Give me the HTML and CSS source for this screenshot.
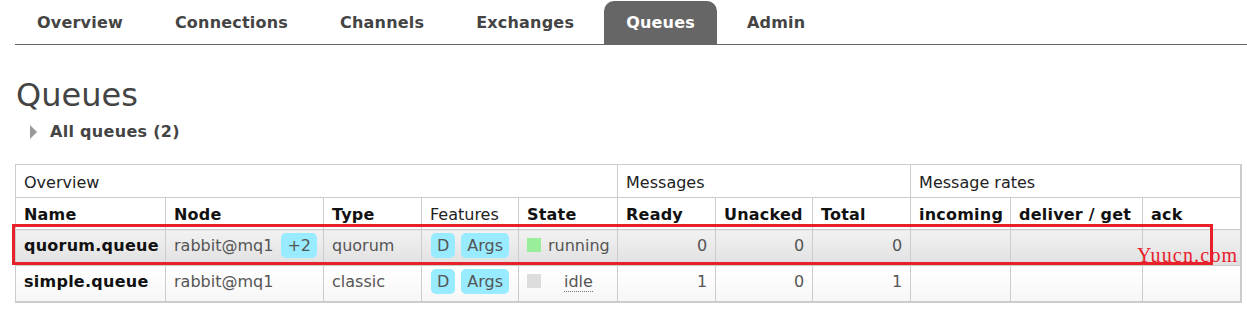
FILE: index.html
```html
<!DOCTYPE html>
<html lang="en">
<head>
  <meta charset="UTF-8" />
  <title>RabbitMQ Management</title>
  <link rel="stylesheet" href="styles.css">
</head>
<body>
  <ul class="tabs">
    <li>Overview</li>
    <li>Connections</li>
    <li>Channels</li>
    <li>Exchanges</li>
    <li class="active">Queues</li>
    <li>Admin</li>
  </ul>

  <div class="main">
    <h1>Queues</h1>
    <div class="section"><span class="arrow"></span>All queues (2)</div>

    <div class="wrap">
      <table class="list">
        <colgroup>
          <col style="width:150px"><col style="width:158px"><col style="width:98px">
          <col style="width:97px"><col style="width:99px"><col style="width:98px">
          <col style="width:97px"><col style="width:98px"><col style="width:100px">
          <col style="width:132px"><col style="width:98px">
        </colgroup>
        <tr class="group">
          <th colspan="5">Overview</th>
          <th colspan="3">Messages</th>
          <th colspan="3">Message rates</th>
        </tr>
        <tr class="head">
          <th>Name</th><th>Node</th><th>Type</th><th class="plain">Features</th><th>State</th>
          <th>Ready</th><th>Unacked</th><th>Total</th>
          <th>incoming</th><th>deliver / get</th><th>ack</th>
        </tr>
        <tr class="alt1">
          <td class="name">quorum.queue</td>
          <td>rabbit@mq1 <span class="tag">+2</span></td>
          <td>quorum</td>
          <td class="feat"><span class="tag">D</span><span class="tag">Args</span></td>
          <td><span class="sq green"></span>running</td>
          <td class="num">0</td><td class="num">0</td><td class="num">0</td>
          <td></td><td></td><td></td>
        </tr>
        <tr class="alt2">
          <td class="name">simple.queue</td>
          <td>rabbit@mq1</td>
          <td>classic</td>
          <td class="feat"><span class="tag">D</span><span class="tag">Args</span></td>
          <td><span class="sq grey"></span><abbr>idle</abbr></td>
          <td class="num">1</td><td class="num">0</td><td class="num">1</td>
          <td></td><td></td><td></td>
        </tr>
      </table>
      <div class="mark"></div>
      <div class="water">Yuucn.com</div>
    </div>
  </div>
</body>
</html>
```

FILE: styles.css
```css
body {
  margin: 0;
  padding: 0 0 0 15px;
  font-family: "DejaVu Sans", Verdana, sans-serif;
  color: #444;
  background: #fff;
}
.tabs {
  list-style: none;
  margin: 1px 0 0;
  padding: 0 0 0 0;
  display: flex;
  border-bottom: 1px solid #666;
  height: 43px;
}
.tabs li {
  font-weight: bold;
  font-size: 16px;
  letter-spacing: 0.2px;
  padding: 12px 22px 0;
  margin-right: 8px;
  border-radius: 10px 10px 0 0;
}
.tabs li.active {
  background: #666;
  color: #fff;
}
.main {
  padding-right: 7px;
}
h1 {
  font-weight: normal;
  font-size: 32px;
  margin: 30px 0 0 1px;
  line-height: 40px;
  color: #444;
}
.section {
  font-weight: bold;
  font-size: 16px;
  letter-spacing: 0.3px;
  margin: 7px 0 0 15px;
  display: flex;
  align-items: center;
  gap: 13px;
}
.arrow {
  width: 0;
  height: 0;
  border-left: 7px solid #999;
  border-top: 7px solid transparent;
  border-bottom: 7px solid transparent;
}
.wrap {
  position: relative;
  margin-top: 23px;
  width: 1226px;
}
.list {
  border-collapse: collapse;
  table-layout: fixed;
  width: 1226px;
  border: 1px solid #ccc;
  border-right-width: 2px;
  border-bottom-width: 2px;
  font-size: 16px;
}
.list th, .list td {
  border: 1px solid #ccc;
  text-align: left;
  padding: 0 8px;
  white-space: nowrap;
}
.group th {
  font-weight: normal;
  color: #222;
  height: 30px;
  padding-top: 2px;
}
.head th {
  color: #111;
  height: 29px;
  padding-top: 2px;
  letter-spacing: 0.2px;
}
.head th.plain {
  font-weight: normal;
  color: #222;
  letter-spacing: 0;
}
.list td {
  color: #555;
  height: 30px;
  padding-bottom: 5px;
}
.alt1 td {
  background: linear-gradient(#f2f2f2, #e0e0e0);
}
.alt2 td {
  background: linear-gradient(#ffffff, #f6f6f6);
}
.list td.name {
  font-weight: bold;
  color: #111;
  letter-spacing: 0.25px;
}
.num {
  text-align: right !important;
}
.tag {
  display: inline-block;
  background: #99ebff;
  border-radius: 5px;
  padding: 3px 6px;
  line-height: 19px;
  margin-left: 3px;
}
.feat .tag {
  margin: 0 5px 0 1px;
}
.sq {
  display: inline-block;
  width: 14px;
  height: 14px;
  margin-right: 7px;
  vertical-align: -1px;
}
.green { background: #99ee99; }
.grey { background: #dddddd; margin-right: 23px; }
abbr {
  text-decoration: none;
  border-bottom: 1px dotted #777;
}
.mark {
  position: absolute;
  left: -3px;
  top: 60px;
  width: 1195px;
  height: 35px;
  border: 3px solid #e8202a;
}
.water {
  position: absolute;
  left: 1122px;
  top: 80px;
  font-family: "Liberation Serif", serif;
  font-size: 20px;
  color: #e8202a;
  letter-spacing: 1.2px;
}
```
